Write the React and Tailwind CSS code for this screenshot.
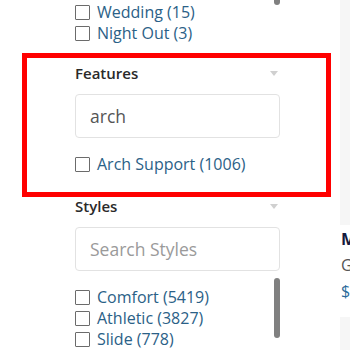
function Caret() {
  return <span className="mr-[2px] h-0 w-0 border-x-[4px] border-t-[5px] border-x-transparent border-t-[#d0d0d0]" />;
}

function CheckRow({ label }) {
  return (
    <label className="flex h-[21px] items-center gap-[7px] text-[16px] leading-[21px] text-[#2b6187]">
      <span className="h-[15px] w-[15px] shrink-0 rounded-[1px] border-[1.5px] border-[#6b6b6b] bg-white" />
      <span>{label}</span>
    </label>
  );
}

function Heading({ children }) {
  return (
    <div className="flex h-[18px] items-center justify-between">
      <h4 className="text-[15px] font-semibold leading-[18px] text-[#2a2a2a]">{children}</h4>
      <Caret />
    </div>
  );
}

function SearchBox({ value, placeholder }) {
  return (
    <div className="mt-[12px] flex h-[44px] items-center rounded-[4px] border-[1.5px] border-[#e2e2e2] bg-white px-[14px] text-[17.5px]">
      {value ? (
        <span className="text-[#555]">{value}</span>
      ) : (
        <span className="text-[#9a9a9a]">{placeholder}</span>
      )}
    </div>
  );
}

export default function App() {
  return (
    <div className="flex h-[350px] w-[350px] overflow-hidden bg-white font-['Open_Sans',sans-serif]">
      <div className="w-[340px] shrink-0">
        <div className="relative w-[280px] pl-[75px] pt-[2px]">
          <div className="absolute right-0 top-[-4px] h-[9px] w-[6px] rounded-full bg-[#808080]" />
          <CheckRow label="Wedding (15)" />
          <CheckRow label="Night Out (3)" />
        </div>

        <div className="ml-[22px] mt-[9px] w-[309px] border-[5px] border-[#ff0000] pb-[17.5px] pl-[48px] pt-[6px]">
          <div className="w-[205px]">
            <Heading>Features</Heading>
            <SearchBox value="arch" />
            <div className="mt-[15.5px]">
              <CheckRow label="Arch Support (1006)" />
            </div>
          </div>
        </div>

        <div className="w-[280px] pl-[75px]">
          <Heading>Styles</Heading>
          <SearchBox placeholder="Search Styles" />
          <div className="mt-[7px] flex justify-between">
            <div className="pt-[8.5px]">
              <CheckRow label="Comfort (5419)" />
              <CheckRow label="Athletic (3827)" />
              <CheckRow label="Slide (778)" />
            </div>
            <div className="h-[60px] w-[6px] rounded-full bg-[#808080]" />
          </div>
        </div>
      </div>

      <div className="w-[10px] shrink-0 overflow-hidden whitespace-nowrap">
        <div className="h-[225px] bg-[#f6f6f6]" />
        <div className="pl-[1px] pt-[1px] leading-[26px]">
          <p className="text-[16.5px] font-bold text-[#151a3c]">Mephisto</p>
          <p className="text-[16px] text-[#555]">Gray</p>
          <p className="text-[16px] text-[#2a6b9a]">$129.95</p>
        </div>
        <div className="mt-[13px] h-[40px] bg-[#f6f6f6]" />
      </div>
    </div>
  );
}
